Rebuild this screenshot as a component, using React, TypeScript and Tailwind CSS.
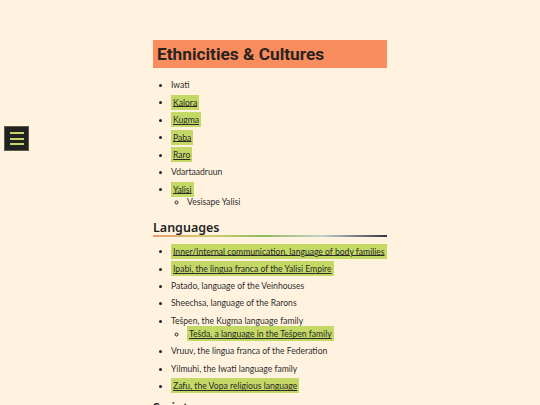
import React from "react";

type Item = { text: string; link?: boolean; sub?: Item[] };

const ethnicities: Item[] = [
  { text: "Iwati" },
  { text: "Kalora", link: true },
  { text: "Kugma", link: true },
  { text: "Paba", link: true },
  { text: "Raro", link: true },
  { text: "Vdartaadruun" },
  { text: "Yalisi", link: true, sub: [{ text: "Vesisape Yalisi" }] },
];

const languages: Item[] = [
  { text: "Inner/Internal communication, language of body families", link: true },
  { text: "Ipabi, the lingua franca of the Yalisi Empire", link: true },
  { text: "Patado, language of the Veinhouses" },
  { text: "Sheechsa, language of the Rarons" },
  {
    text: "Tešpen, the Kugma language family",
    sub: [{ text: "Tešda, a language in the Tešpen family", link: true }],
  },
  { text: "Vruuv, the lingua franca of the Federation" },
  { text: "Yilmuhi, the Iwati language family" },
  { text: "Zafu, the Vopa religious language", link: true },
];

function Label({ item }: { item: Item }) {
  if (item.link) {
    return (
      <a className="bg-[#c4d866] px-[2px] py-[2.5px] underline decoration-[#2a2a2a] underline-offset-[1px] text-[#2a2a2a]">
        {item.text}
      </a>
    );
  }
  return <span>{item.text}</span>;
}

function List({ items, top }: { items: Item[]; top: string }) {
  return (
    <ul className={`list-disc pl-[18px] mb-[4px] ${top}`}>
      {items.map((it) => (
        <li key={it.text} className="whitespace-nowrap leading-[13px] mb-[4.4px] marker:text-[#222]">
          <Label item={it} />
          {it.sub && (
            <ul className="list-[circle] pl-[16px]">
              {it.sub.map((s) => (
                <li key={s.text} className="leading-[13px]">
                  <Label item={s} />
                </li>
              ))}
            </ul>
          )}
        </li>
      ))}
    </ul>
  );
}

export default function App() {
  return (
    <div
      className="relative h-[405px] w-full overflow-hidden bg-[#fff3df] text-[#2e2e2e] text-[8.6px]"
      style={{ fontFamily: "Lato, 'Noto Sans', sans-serif" }}
    >
      <button className="absolute left-[4px] top-[126px] flex h-[25px] w-[25px] flex-col items-center justify-center gap-[3.5px] border border-[#5a5a4a] bg-[#222220]">
        <span className="block h-[2px] w-[14px] bg-[#c4d866]" />
        <span className="block h-[2px] w-[14px] bg-[#c4d866]" />
        <span className="block h-[2px] w-[14px] bg-[#c4d866]" />
      </button>

      <main className="mx-auto w-[234px] pt-[40px]">
        <h1
          className="h-[28px] bg-[#f98d5e] pl-[4px] text-[17.3px] font-bold leading-[28px] text-[#2a2320]"
          style={{ fontFamily: "Roboto, 'Noto Sans', sans-serif" }}
        >
          Ethnicities &amp; Cultures
        </h1>
        <List items={ethnicities} top="mt-[11px]" />
        <h2
          className="pt-[6px] text-[12.5px] font-semibold leading-[15px] text-[#1f1f1f]"
          style={{ fontFamily: "'Noto Sans', sans-serif" }}
        >
          Languages
        </h2>
        <div className="h-[2px] w-full bg-[linear-gradient(to_right,#eb9a6c_0%,#cfd06c_25%,#8fba60_47%,#c0d2cc_72%,#3c3346_100%)]" />
        <List items={languages} top="mt-[8.5px]" />
        <h2
          className="pt-[3px] text-[12.5px] font-semibold leading-[15px] text-[#1f1f1f]"
          style={{ fontFamily: "'Noto Sans', sans-serif" }}
        >
          Scripts
        </h2>
      </main>
    </div>
  );
}
